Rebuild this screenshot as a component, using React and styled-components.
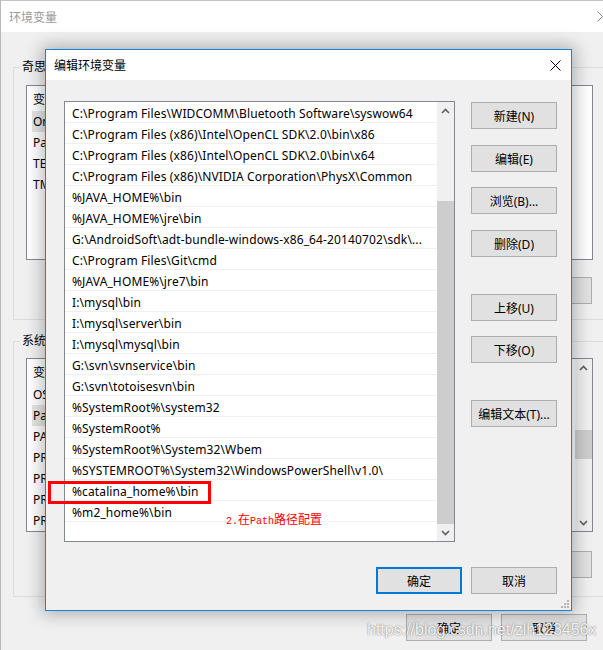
import React from 'react';
import styled, { createGlobalStyle } from 'styled-components';

const Global = createGlobalStyle`
  html, body { margin: 0; padding: 0; width: 603px; height: 650px; overflow: hidden; background: #f0f0f0; }
  body { font-family: "Noto Sans", "Noto Sans CJK SC", sans-serif; font-size: 12px; color: #000; }
  * { box-sizing: border-box; }
`;

const Root = styled.div`
  position: relative;
  width: 603px;
  height: 650px;
  overflow: hidden;
`;

/* ---------- background window ---------- */
const Window = styled.div`
  width: 626px;
  height: 650px;
  background: #f0f0f0;
  border-left: 1px solid #b9b9b9;
  display: flex;
  flex-direction: column;
`;

const TitleBar = styled.div`
  flex: none;
  height: ${p => p.$h}px;
  background: #fff;
  border-top: ${p => (p.$top ? '1px solid #c4c4c4' : 'none')};
  display: flex;
  align-items: center;
  justify-content: space-between;
  padding-left: 8px;
  color: ${p => (p.$inactive ? '#999' : '#000')};
  font-size: 12px;
`;

const CloseIcon = ({ color, mr }) => (
  <CloseWrap $mr={mr}>
    <svg width="11" height="11" viewBox="0 0 11 11">
      <path d="M0.5 0.5 L10.5 10.5 M10.5 0.5 L0.5 10.5" stroke={color} strokeWidth="1" fill="none" />
    </svg>
  </CloseWrap>
);

const CloseWrap = styled.span`
  display: flex;
  margin-right: ${p => p.$mr}px;
`;

const WinBody = styled.div`
  flex: 1;
  display: flex;
  flex-direction: column;
  padding: 0 20px 0 12px;
`;

const Group = styled.div`
  margin-top: ${p => p.$mt}px;
  border: 1px solid #dcdcdc;
  padding: 0 12px ${p => p.$pb}px;
  display: flex;
  flex-direction: column;
`;

const Legend = styled.div`
  align-self: flex-start;
  margin: -9px 0 0 -6px;
  padding: 0 2px;
  height: 16px;
  line-height: 16px;
  background: #f0f0f0;
`;

const ListBox = styled.div`
  margin-top: ${p => p.$mt}px;
  height: ${p => p.$h}px;
  border: 1px solid #828790;
  background: #fff;
  display: flex;
  overflow: hidden;
`;

const BgRows = styled.div`
  flex: 1;
  padding-top: 3px;
  display: flex;
  flex-direction: column;
`;

const BgRow = styled.div`
  height: ${p => (p.$header ? 22 : 21)}px;
  line-height: ${p => (p.$header ? 22 : 21)}px;
  margin-left: 5px;
  padding-left: 1px;
  width: 180px;
  background: ${p => (p.$sel ? '#e5e5e5' : 'transparent')};
  white-space: nowrap;
`;

const ButtonRow = styled.div`
  margin-top: ${p => p.$mt}px;
  display: flex;
  justify-content: flex-end;
  gap: ${p => p.$gap}px;
  padding-right: ${p => p.$pr || 0}px;
`;

const Button = styled.div`
  flex: none;
  width: 86px;
  height: 27px;
  margin-top: ${p => p.$mt || 0}px;
  background: #e1e1e1;
  border: ${p => (p.$default ? '2px solid #0078d7' : '1px solid #adadad')};
  display: flex;
  align-items: center;
  justify-content: center;
  font-size: 12px;
  color: #000;
  white-space: nowrap;
`;

/* ---------- scrollbars ---------- */
const ScrollBar = styled.div`
  flex: none;
  width: 17px;
  background: #f0f0f0;
  display: flex;
  flex-direction: column;
`;

const ArrowBtn = styled.div`
  flex: none;
  height: 17px;
  display: flex;
  align-items: center;
  justify-content: center;
`;

const Track = styled.div`
  flex: 1;
  display: flex;
  flex-direction: column;
  padding-top: ${p => p.$pt}px;
  padding-bottom: ${p => p.$pb || 0}px;
`;

const Thumb = styled.div`
  flex: 1;
  background: #cdcdcd;
`;

const Chevron = ({ up }) => (
  <svg width="9" height="6" viewBox="0 0 9 6">
    <path
      d={up ? 'M1 5 L4.5 1.5 L8 5' : 'M1 1 L4.5 4.5 L8 1'}
      stroke="#606060"
      strokeWidth="1.6"
      fill="none"
    />
  </svg>
);

/* ---------- foreground dialog ---------- */
const Dialog = styled.div`
  position: absolute;
  left: 45px;
  top: 49px;
  width: 527px;
  height: 562px;
  border: 1px solid #1883d7;
  background: #f0f0f0;
  box-shadow: 0 0 16px 3px rgba(0, 0, 0, 0.28);
  display: flex;
  flex-direction: column;
`;

const DlgBody = styled.div`
  flex: 1;
  display: flex;
  flex-direction: column;
  padding: 21px 14px 17px 18px;
`;

const DlgMain = styled.div`
  display: flex;
  gap: 16px;
`;

const PathList = styled.div`
  width: 391px;
  height: 441px;
  border: 1px solid #828790;
  background: #fff;
  display: flex;
`;

const PathRows = styled.div`
  flex: 1;
  min-width: 0;
  display: flex;
  flex-direction: column;
`;

const PathRow = styled.div`
  height: 21px;
  line-height: 23px;
  border-bottom: 1px solid #f0f0f0;
  padding-left: 7px;
  white-space: nowrap;
  overflow: hidden;
  font-size: 12px;
  letter-spacing: 0.12px;
`;

const ButtonCol = styled.div`
  display: flex;
  flex-direction: column;
  margin-top: 1px;
`;

const Grip = styled.svg`
  position: absolute;
  right: 1px;
  bottom: 1px;
`;

const RedBox = styled.div`
  position: absolute;
  left: 48px;
  top: 481px;
  width: 163px;
  height: 23px;
  border: 3px solid #ff0000;
`;

const Note = styled.div`
  position: absolute;
  left: 226px;
  top: 512px;
  line-height: 13px;
  font-size: 12px;
  color: #ff0000;
  font-family: "Noto Sans CJK SC", sans-serif;
  white-space: nowrap;
`;

const NoteLatin = styled.span`
  font-family: "Liberation Mono", monospace;
  font-size: 10px;
`;

const Watermark = styled.div`
  position: absolute;
  left: 367px;
  top: 620px;
  font-family: "Liberation Sans", Arial, sans-serif;
  font-size: 16px;
  line-height: 20px;
  color: rgba(255, 255, 255, 0.92);
  text-shadow: 0 0 2px rgba(0, 0, 0, 0.35), 0 0 1px rgba(0, 0, 0, 0.3);
  white-space: nowrap;
`;

const paths = [
  'C:\\Program Files\\WIDCOMM\\Bluetooth Software\\syswow64',
  'C:\\Program Files (x86)\\Intel\\OpenCL SDK\\2.0\\bin\\x86',
  'C:\\Program Files (x86)\\Intel\\OpenCL SDK\\2.0\\bin\\x64',
  'C:\\Program Files (x86)\\NVIDIA Corporation\\PhysX\\Common',
  '%JAVA_HOME%\\bin',
  '%JAVA_HOME%\\jre\\bin',
  'G:\\AndroidSoft\\adt-bundle-windows-x86_64-20140702\\sdk\\...',
  'C:\\Program Files\\Git\\cmd',
  '%JAVA_HOME%\\jre7\\bin',
  'I:\\mysql\\bin',
  'I:\\mysql\\server\\bin',
  'I:\\mysql\\mysql\\bin',
  'G:\\svn\\svnservice\\bin',
  'G:\\svn\\totoisesvn\\bin',
  '%SystemRoot%\\system32',
  '%SystemRoot%',
  '%SystemRoot%\\System32\\Wbem',
  '%SYSTEMROOT%\\System32\\WindowsPowerShell\\v1.0\\',
  '%catalina_home%\\bin',
  '%m2_home%\\bin',
];

const userVars = ['OneDrive', 'Path', 'TEMP', 'TMP'];
const sysVars = [
  'OS',
  'Path',
  'PATHEXT',
  'PROCESSOR_ARCHITECTURE',
  'PROCESSOR_IDENTIFIER',
  'PROCESSOR_LEVEL',
  'PROCESSOR_REVISION',
];

const sideButtons = [
  { label: '新建(N)', mt: 0 },
  { label: '编辑(E)', mt: 16 },
  { label: '浏览(B)...', mt: 15 },
  { label: '删除(D)', mt: 16 },
  { label: '上移(U)', mt: 37 },
  { label: '下移(O)', mt: 15 },
  { label: '编辑文本(T)...', mt: 37 },
];

export default function App() {
  return (
    <Root>
      <Global />
      <Window>
        <TitleBar $h={32} $top $inactive>
          <span>环境变量</span>
          <CloseIcon color="#8a8a8a" mr={18} />
        </TitleBar>
        <WinBody>
          <Group $mt={35} $pb={15}>
            <Legend>奇思 的用户变量(U)</Legend>
            <ListBox $mt={10} $h={175}>
              <BgRows>
                <BgRow $header>变量</BgRow>
                {userVars.map((v, i) => (
                  <BgRow key={v} $sel={i === 0}>{v}</BgRow>
                ))}
              </BgRows>
            </ListBox>
            <ButtonRow $mt={17} $gap={10} $pr={1}>
              <Button>新建(N)...</Button>
              <Button>编辑(E)...</Button>
              <Button>删除(D)</Button>
            </ButtonRow>
          </Group>
          <Group $mt={21} $pb={18}>
            <Legend>系统变量(S)</Legend>
            <ListBox $mt={9} $h={174}>
              <BgRows>
                <BgRow $header>变量</BgRow>
                {sysVars.map((v, i) => (
                  <BgRow key={v} $sel={i === 1}>{v}</BgRow>
                ))}
              </BgRows>
              <ScrollBar>
                <ArrowBtn><Chevron up /></ArrowBtn>
                <Track $pt={54} $pb={55}>
                  <Thumb />
                </Track>
                <ArrowBtn><Chevron /></ArrowBtn>
              </ScrollBar>
            </ListBox>
            <ButtonRow $mt={19} $gap={10} $pr={1}>
              <Button>新建(W)...</Button>
              <Button>编辑(I)...</Button>
              <Button>删除(L)</Button>
            </ButtonRow>
          </Group>
          <ButtonRow $mt={17} $gap={9} $pr={19}>
            <Button>确定</Button>
            <Button>取消</Button>
          </ButtonRow>
        </WinBody>
      </Window>

      <Dialog>
        <TitleBar $h={30}>
          <span>编辑环境变量</span>
          <CloseIcon color="#000" mr={10} />
        </TitleBar>
        <DlgBody>
          <DlgMain>
            <PathList>
              <PathRows>
                {paths.map(p => (
                  <PathRow key={p}>{p}</PathRow>
                ))}
              </PathRows>
              <ScrollBar>
                <ArrowBtn><Chevron up /></ArrowBtn>
                <Track $pt={82}>
                  <Thumb />
                </Track>
                <ArrowBtn><Chevron /></ArrowBtn>
              </ScrollBar>
            </PathList>
            <ButtonCol>
              {sideButtons.map(b => (
                <Button key={b.label} $mt={b.mt}>{b.label}</Button>
              ))}
            </ButtonCol>
          </DlgMain>
          <ButtonRow $mt={25} $gap={9}>
            <Button $default>确定</Button>
            <Button>取消</Button>
          </ButtonRow>
        </DlgBody>
        <Grip width="9" height="9" viewBox="0 0 9 9">
          {[[7, 1], [4, 4], [7, 4], [1, 7], [4, 7], [7, 7]].map(([x, y]) => (
            <rect key={`${x}-${y}`} x={x - 1} y={y - 1} width="2" height="2" fill="#b4b4b4" />
          ))}
        </Grip>
      </Dialog>

      <RedBox />
      <Note>
        <NoteLatin>2.</NoteLatin>在<NoteLatin>Path</NoteLatin>路径配置
      </Note>
      <Watermark>https://blog.csdn.net/zlh123456x</Watermark>
    </Root>
  );
}
